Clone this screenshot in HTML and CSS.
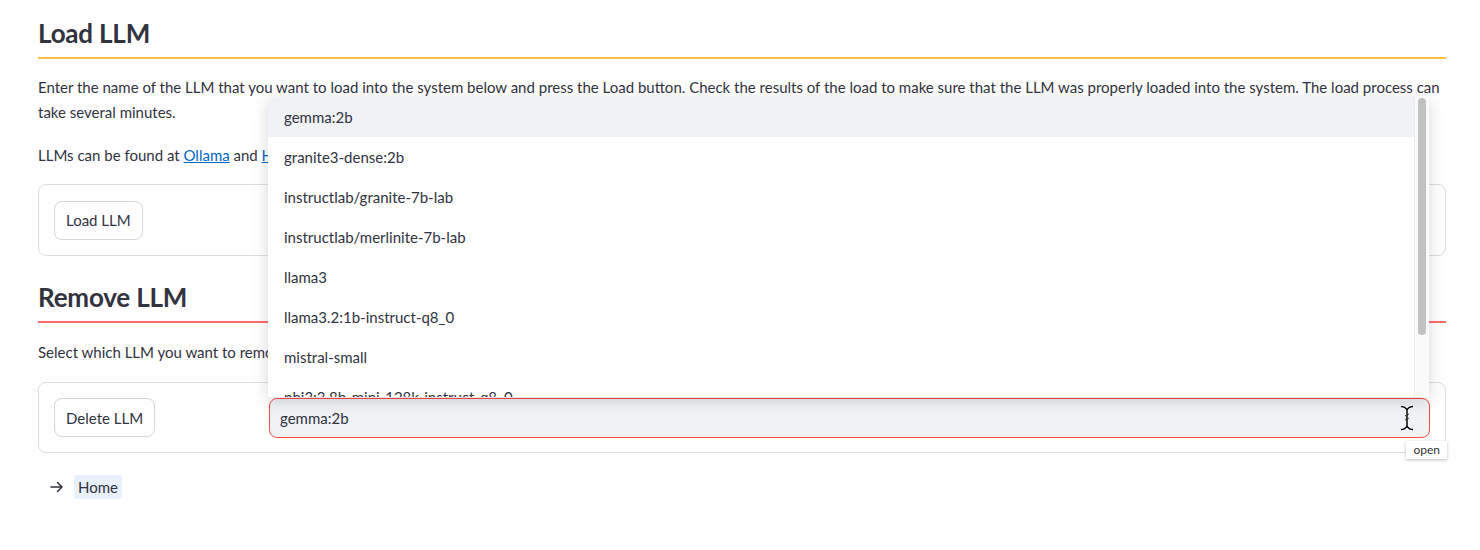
FILE: index.html
```html
<!DOCTYPE html>
<html>
<head>
<meta charset="utf-8">
<link rel="stylesheet" href="styles.css">
</head>
<body>
<main class="page">
  <section class="block">
    <h2 class="heading">Load LLM</h2>
    <hr class="divider divider-orange">
    <p class="text">Enter the name of the LLM that you want to load into the system below and press the Load button. Check the results of the load to make sure that the LLM was properly loaded into the system. The load process can take several minutes.</p>
    <p class="text">LLMs can be found at <a class="link" href="#">Ollama</a> and <a class="link" href="#">Hugging Face</a>.</p>
    <div class="box box-load">
      <div class="col"><button class="btn">Load LLM</button></div>
      <div class="input-plain"></div>
    </div>
  </section>

  <section class="block block-remove">
    <h2 class="heading">Remove LLM</h2>
    <hr class="divider divider-red">
    <p class="text">Select which LLM you want to remove from the system and press the Delete button.</p>
    <div class="box box-remove">
      <div class="col"><button class="btn">Delete LLM</button></div>
      <div class="select-wrap">
        <div class="select">gemma:2b</div>
        <div class="menu">
          <ul class="options">
            <li class="opt opt-active">gemma:2b</li>
            <li class="opt">granite3-dense:2b</li>
            <li class="opt">instructlab/granite-7b-lab</li>
            <li class="opt">instructlab/merlinite-7b-lab</li>
            <li class="opt">llama3</li>
            <li class="opt">llama3.2:1b-instruct-q8_0</li>
            <li class="opt">mistral-small</li>
            <li class="opt">phi3:3.8b-mini-128k-instruct-q8_0</li>
          </ul>
          <div class="scrollbar"><div class="thumb"></div></div>
        </div>
        <svg class="cursor" width="14" height="26" viewBox="0 0 14 26">
          <path d="M1 1.5 C4 1.5 6 3 7 5 C8 3 10 1.5 13 1.5 M7 5 V21 M1 24.5 C4 24.5 6 23 7 21 C8 23 10 24.5 13 24.5" fill="none" stroke="#fff" stroke-width="3.5"/>
          <path d="M1 1.5 C4 1.5 6 3 7 5 C8 3 10 1.5 13 1.5 M7 5 V21 M1 24.5 C4 24.5 6 23 7 21 C8 23 10 24.5 13 24.5" fill="none" stroke="#000" stroke-width="1.5"/>
          <path d="M5 11 L9 9 M5 15 L9 13" stroke="#333" stroke-width="1"/>
        </svg>
        <div class="tip">open</div>
      </div>
    </div>
  </section>

  <nav class="nav">
    <svg class="arrow" width="14" height="14" viewBox="0 0 14 14"><path d="M1 7 H12 M7.5 2.5 L12 7 L7.5 11.5" fill="none" stroke="#31333f" stroke-width="1.5" stroke-linecap="round" stroke-linejoin="round"/></svg>
    <span class="home">Home</span>
  </nav>
</main>
</body>
</html>
```

FILE: styles.css
```css
* { box-sizing: border-box; }
html, body { margin: 0; padding: 0; background: #fff; }
body {
  font-family: "Lato", "Liberation Sans", sans-serif;
  color: #31333f;
  font-size: 15px;
  width: 1480px;
  height: 550px;
  overflow: hidden;
}
.page {
  padding: 14px 34px 0 38px;
  display: flex;
  flex-direction: column;
}
.block { display: flex; flex-direction: column; }
.heading {
  margin: 0;
  font-size: 26px;
  font-weight: 700;
  line-height: 38px;
  letter-spacing: -0.2px;
}
.divider {
  margin: 5px 0 0 0;
  border: none;
  height: 2px;
}
.divider-orange { background: #ffbd45; }
.divider-red { background: #ff6c6c; }
.text {
  margin: 16px 0 0 0;
  line-height: 25px;
  font-size: 15px;
}
.text + .text { margin-top: 18px; }
.link { color: #0068c9; text-decoration: underline; }
.box {
  border: 1px solid #dcdde1;
  border-radius: 8px;
  padding: 0 15px;
  display: grid;
  grid-template-columns: 215px 1fr;
  align-items: center;
}
.box-load { margin-top: 16px; height: 72px; }
.box-remove { margin-top: 17px; height: 71px; }
.col { display: flex; align-items: center; }
.btn {
  font-family: inherit;
  font-size: 15px;
  color: #31333f;
  background: #fff;
  border: 1px solid #d6d6d9;
  border-radius: 8px;
  height: 39px;
  padding: 0 11px;
}
.input-plain { height: 40px; }
.block-remove { margin-top: 22px; }
.block-remove .text { margin-top: 17px; }
.select-wrap { position: relative; height: 40px; }
.select {
  height: 40px;
  background: #f0f2f6;
  border: 1px solid #ff4b4b;
  border-radius: 8px;
  padding: 0 10px;
  display: flex;
  align-items: center;
  font-size: 15px;
}
.menu {
  position: absolute;
  left: -1px;
  bottom: 41px;
  width: 100%;
  height: 300px;
  background: #fff;
  border-radius: 8px 8px 0 0;
  box-shadow: 0 4px 16px rgba(0,0,0,0.16);
  overflow: hidden;
  display: flex;
}
.options {
  list-style: none;
  margin: 0;
  padding: 0;
  flex: 1;
}
.opt {
  height: 40px;
  display: flex;
  align-items: center;
  padding-left: 16px;
  font-size: 15px;
}
.opt-active { background: #f0f2f6; }
.scrollbar {
  width: 15px;
  background: #fafafa;
  border-left: 1px solid #ececec;
  padding: 1px 3px 0 3px;
}
.thumb {
  height: 237px;
  background: #c1c1c1;
  border-radius: 4px;
}
.cursor { position: absolute; right: 16px; top: 7px; }
.tip {
  position: absolute;
  right: -17px;
  top: 43px;
  font-size: 12px;
  background: #fff;
  padding: 1px 7px;
  box-shadow: 0 1px 3px rgba(0,0,0,0.25);
  color: #333;
  line-height: 16px;
}
.nav {
  margin-top: 22px;
  display: flex;
  align-items: center;
  padding-left: 12px;
  gap: 10px;
}
.home {
  background: #e8f0fb;
  border-radius: 4px;
  padding: 2px 4px;
  font-size: 15px;
  line-height: 20px;
}
```
